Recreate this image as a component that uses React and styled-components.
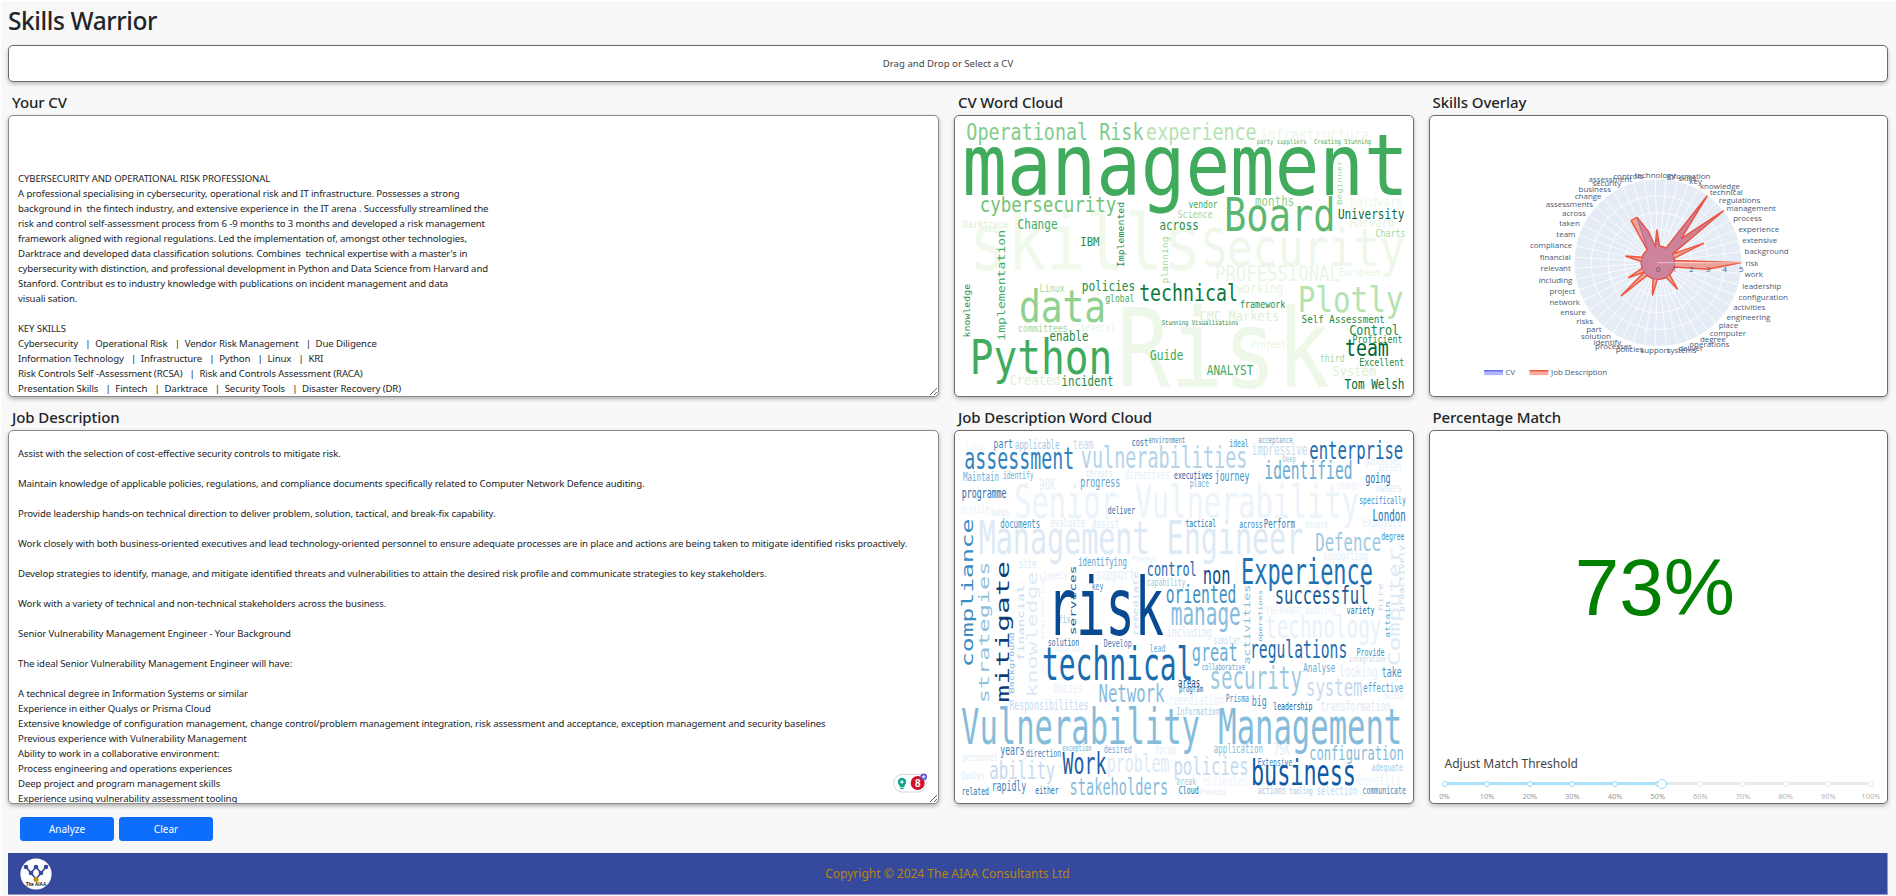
import React from 'react'
import styled, { createGlobalStyle } from 'styled-components'

const GlobalStyle = createGlobalStyle`
  html, body {
    margin: 0;
    padding: 0;
    background: #fff;
    overflow: hidden;
  }
`

const cvText = `


CYBERSECURITY AND OPERATIONAL RISK PROFESSIONAL
A professional specialising in cybersecurity, operational risk and IT infrastructure. Possesses a strong
background in  the fintech industry, and extensive experience in  the IT arena . Successfully streamlined the
risk and control self-assessment process from 6 -9 months to 3 months and developed a risk management
framework aligned with regional regulations. Led the implementation of, amongst other technologies,
Darktrace and developed data classification solutions. Combines  technical expertise with a master's in
cybersecurity with distinction, and professional development in Python and Data Science from Harvard and
Stanford. Contribut es to industry knowledge with publications on incident management and data
visuali sation.

KEY SKILLS
Cybersecurity   |  Operational Risk   |  Vendor Risk Management   |  Due Diligence
Information Technology   |  Infrastructure   |  Python   |  Linux   |  KRI
Risk Controls Self -Assessment (RCSA)   |  Risk and Controls Assessment (RACA)
Presentation Skills   |  Fintech   |  Darktrace   |  Security Tools   |  Disaster Recovery (DR)`

const jobText = `Assist with the selection of cost-effective security controls to mitigate risk.

Maintain knowledge of applicable policies, regulations, and compliance documents specifically related to Computer Network Defence auditing.

Provide leadership hands-on technical direction to deliver problem, solution, tactical, and break-fix capability.

Work closely with both business-oriented executives and lead technology-oriented personnel to ensure adequate processes are in place and actions are being taken to mitigate identified risks proactively.

Develop strategies to identify, manage, and mitigate identified threats and vulnerabilities to attain the desired risk profile and communicate strategies to key stakeholders.

Work with a variety of technical and non-technical stakeholders across the business.

Senior Vulnerability Management Engineer - Your Background

The ideal Senior Vulnerability Management Engineer will have:

A technical degree in Information Systems or similar
Experience in either Qualys or Prisma Cloud
Extensive knowledge of configuration management, change control/problem management integration, risk assessment and acceptance, exception management and security baselines
Previous experience with Vulnerability Management
Ability to work in a collaborative environment:
Process engineering and operations experiences
Deep project and program management skills
Experience using vulnerability assessment tooling`

// [word, x, baseline y, length, colour, vertical, font size if not derived from length]
const cvWords = [
  ['Operational Risk', 78, 148, 532, '#7fcc8b'], ['experience', 618, 148, 332, '#b5e3b0'],
  ['infrastructure', 960, 148, 328, '#eef8ea'], ['party suppliers', 950, 160, 150, '#5aae74'],
  ['Creating Stunning', 1122, 160, 172, '#41ab5d'], ['management', 66, 315, 1340, '#41ab5d', false, 212],
  ['cybersecurity', 118, 365, 410, '#74c476'], ['Board', 852, 423, 335, '#5cb870'],
  ['months', 945, 347, 118, '#8fd18f'], ['vendor', 745, 353, 88, '#41ab5d'],
  ['Science', 712, 384, 105, '#a1d99b'], ['hardware', 1230, 352, 160, '#eef8ea'],
  ['University', 1194, 388, 200, '#0b6b3a'], ['Harvard', 1230, 411, 133, '#e5f5e0'],
  ['Charts', 1307, 442, 90, '#a1d99b'], ['Darktrace', 68, 413, 135, '#dcf0d6'],
  ['Change', 232, 416, 120, '#41ab5d'], ['across', 658, 420, 118, '#238b45'],
  ['IBM', 420, 470, 58, '#238b45'], ['skills', 85, 540, 700, '#f0f9ec'],
  ['Security', 785, 530, 610, '#eef8ea'], ['PROFESSIONAL', 825, 575, 375, '#eaf6e6'],
  ['European', 1198, 558, 122, '#e5f5e0'], ['Risk', 530, 895, 640, '#edf8e9'],
  ['Beginner', 1205, 345, 135, '#a1d99b', true], ['Implemented', 553, 533, 198, '#238b45', true],
  ['planning', 685, 582, 142, '#a1d99b', true], ['implementation', 195, 755, 335, '#41ab5d', true],
  ['knowledge', 88, 745, 162, '#2b8c4e', true], ['Linux', 298, 607, 76, '#a1d99b'],
  ['policies', 425, 606, 160, '#238b45'], ['global', 495, 638, 88, '#41ab5d'],
  ['technical', 597, 636, 297, '#0a7a3e'], ['working', 890, 612, 140, '#e5f5e0'],
  ['framework', 900, 656, 136, '#238b45'], ['data', 236, 697, 262, '#8fd18f'],
  ['Plotly', 1073, 668, 318, '#b5e3b0'], ['CMC Markets', 778, 695, 240, '#dcf0d6'],
  ['Stunning Visualisations', 665, 708, 230, '#238b45'], ['Self Assessment', 1085, 700, 250, '#238b45'],
  ['Control', 1228, 737, 150, '#238b45'], ['Proficient', 1238, 762, 150, '#238b45'],
  ['committees', 233, 730, 150, '#a1d99b'], ['several', 420, 725, 105, '#e5f5e0'],
  ['enable', 328, 757, 117, '#238b45'], ['Python', 88, 855, 428, '#41ab5d'],
  ['Guide', 630, 812, 100, '#41ab5d'], ['Project', 933, 778, 104, '#e5f5e0'],
  ['team', 1215, 800, 132, '#00693a'], ['third', 1140, 820, 74, '#a1d99b'],
  ['Excellent', 1258, 830, 135, '#238b45'], ['ANALYST', 800, 860, 140, '#41ab5d'],
  ['System', 1177, 863, 132, '#dcf0d6'], ['Created', 208, 890, 152, '#dcf0d6'],
  ['incident', 364, 892, 156, '#238b45'], ['Tom Welsh', 1214, 900, 180, '#00693a']
]

const jobWords = [
  ['taken', 76, 135, 58, '#eff3ff'], ['part', 160, 128, 58, '#3a83bd'], ['applicable', 224, 130, 134, '#9ecae1'],
  ['team', 398, 130, 62, '#c6dbef'], ['cost', 574, 122, 50, '#2171b5'], ['environment', 625, 112, 110, '#4292c6'],
  ['ideal', 868, 125, 58, '#4292c6'], ['acceptance', 955, 113, 103, '#6baed6'], ['impressive', 935, 148, 167, '#c6dbef'],
  ['Deep', 1028, 168, 40, '#9ecae1'], ['enterprise', 1108, 160, 282, '#1d6cb0'], ['assessment', 72, 192, 330, '#3182bd'],
  ['vulnerabilities', 422, 188, 500, '#b3d3e8'], ['identified', 973, 222, 265, '#6baed6'], ['processes', 1277, 180, 105, '#e3eef9'],
  ['project', 1317, 198, 70, '#e3eef9'], ['Maintain', 68, 228, 108, '#6baed6'], ['identify', 188, 220, 92, '#6baed6'],
  ['threats', 437, 214, 80, '#dceaf6'], ['directives', 554, 220, 134, '#e3eef9'], ['executives', 702, 220, 116, '#1a5a96'],
  ['journey', 824, 228, 104, '#4292c6'], ['going', 1276, 232, 76, '#2171b5'], ['progress', 420, 244, 120, '#5ba3cf'],
  ['place', 749, 246, 58, '#6baed6'], ['90K', 296, 253, 50, '#e3eef9'], ['change', 1190, 250, 68, '#e8f1fa'],
  ['owners', 1308, 260, 78, '#dceaf6'], ['programme', 64, 278, 135, '#2d6ca8'], ['Senior Vulnerability', 222, 338, 1035, '#ebf3fb'],
  ['specifically', 1258, 296, 140, '#4292c6'], ['profile', 62, 323, 84, '#e8f1fa'], ['hands', 152, 332, 56, '#dceaf6'],
  ['deliver', 503, 325, 82, '#2b6ca3'], ['London', 1298, 346, 100, '#2171b5'], ['documents', 180, 368, 120, '#4292c6'],
  ['evaluate', 330, 365, 104, '#dceaf6'], ['Assist', 456, 368, 80, '#dceaf6'], ['tactical', 736, 366, 92, '#2171b5'],
  ['across', 898, 370, 70, '#3182bd'], ['Perform', 971, 368, 94, '#3182bd'], ['ensure', 1095, 370, 70, '#e3eef9'],
  ['exposure', 1268, 367, 120, '#e3eef9'], ['Management Engineer', 115, 448, 975, '#dceaf6'], ['Defence', 1126, 437, 198, '#9ecae1'],
  ['degree', 1324, 404, 70, '#4292c6'], ['supporting', 1150, 466, 134, '#e3eef9'], ['Process', 577, 472, 70, '#e3eef9'],
  ['identifying', 414, 484, 146, '#5ba3cf'], ['control', 620, 512, 150, '#1d6cb0'], ['Experience', 903, 537, 396, '#2171b5'],
  ['non', 788, 537, 84, '#0f4f8f'], ['closely', 298, 523, 84, '#e3eef9'], ['support', 466, 525, 118, '#e3eef9'],
  ['capability', 620, 542, 116, '#9ecae1'], ['key', 455, 556, 34, '#4292c6'], ['site', 236, 488, 52, '#dceaf6'],
  ['oriented', 677, 596, 212, '#4292c6'], ['successful', 1004, 597, 282, '#1a5a96'], ['variety', 1220, 627, 84, '#2171b5'],
  ['risk', 320, 692, 352, '#084a91'], ['fix', 355, 655, 36, '#9ecae1'], ['manage', 692, 660, 210, '#85bcdc'],
  ['relevant', 978, 628, 106, '#e8f1fa'], ['auditing', 1095, 628, 92, '#e8f1fa'], ['technology', 975, 700, 350, '#e8f1fa'],
  ['including', 680, 697, 135, '#dceaf6'], ['similar', 820, 718, 80, '#c6dbef'], ['solution', 323, 725, 94, '#2d6ca8'],
  ['Develop', 491, 728, 84, '#3182bd'], ['lead', 628, 742, 48, '#6baed6'], ['baselines', 345, 742, 86, '#e8f1fa'],
  ['regulations', 930, 760, 292, '#1d6cb0'], ['great', 755, 770, 138, '#6baed6'], ['Provide', 1250, 755, 84, '#4292c6'],
  ['integration', 1227, 773, 110, '#c6dbef'], ['Analyse', 1090, 802, 96, '#6baed6'], ['collaborative', 785, 798, 130, '#5ba3cf'],
  ['technical', 305, 826, 455, '#1a6cb0'], ['looking', 1198, 818, 116, '#e3eef9'], ['take', 1326, 818, 60, '#4292c6'],
  ['security', 808, 855, 278, '#9ecae1'], ['areas', 714, 848, 66, '#0f4f8f'], ['program', 717, 862, 72, '#2b6ca3'],
  ['system', 1098, 876, 170, '#c6dbef'], ['effective', 1270, 862, 120, '#5ba3cf'], ['skills', 1332, 884, 58, '#dceaf6'],
  ['Duties', 340, 865, 88, '#e8f1fa'], ['Network', 475, 893, 198, '#85bcdc'], ['Prisma', 857, 892, 70, '#4292c6'],
  ['big', 935, 906, 45, '#4292c6'], ['leadership', 1000, 918, 117, '#1a5a96'], ['transformation', 1142, 920, 210, '#dceaf6'],
  ['remediation', 685, 903, 165, '#e8f1fa'], ['Responsibilities', 207, 917, 238, '#c6dbef'], ['Information', 709, 932, 130, '#a5cde4'],
  ['Vulnerability Management', 62, 1020, 1325, '#85bcdc'], ['exception', 366, 1040, 88, '#6baed6'], ['desired', 491, 1046, 84, '#6baed6'],
  ['focus', 643, 1050, 66, '#e3eef9'], ['application', 821, 1048, 148, '#85bcdc'], ['75K', 1000, 1054, 50, '#e3eef9'],
  ['configuration', 1108, 1068, 284, '#85bcdc'], ['years', 180, 1053, 73, '#3a83bd'], ['direction', 257, 1060, 106, '#3a83bd'],
  ['personnel', 67, 1070, 105, '#dceaf6'], ['Work', 367, 1112, 132, '#1d5fa3'], ['problem', 500, 1105, 188, '#dceaf6'],
  ['policies', 700, 1115, 226, '#c6dbef'], ['Extensive', 953, 1086, 104, '#3a83bd'], ['business', 933, 1145, 315, '#0f5aa3'],
  ['adequate', 1295, 1100, 94, '#a5cde4'], ['ability', 147, 1125, 198, '#c6dbef'], ['Qualys', 62, 1127, 70, '#dceaf6'],
  ['rapidly', 154, 1163, 104, '#3a83bd'], ['stakeholders', 388, 1175, 296, '#85bcdc'], ['break', 710, 1144, 58, '#9ecae1'],
  ['estimated', 787, 1148, 135, '#eef4fb'], ['benefits', 1253, 1145, 130, '#eef4fb'], ['related', 64, 1175, 82, '#2b6ca3'],
  ['either', 285, 1172, 70, '#2b6ca3'], ['Cloud', 716, 1172, 60, '#2b6ca3'], ['Previous', 780, 1175, 80, '#dceaf6'],
  ['actions', 953, 1172, 84, '#9ecae1'], ['tooling', 1048, 1170, 70, '#9ecae1'], ['selection', 1130, 1175, 122, '#c6dbef'],
  ['communicate', 1268, 1172, 130, '#3a83bd'],
  ['compliance', 98, 788, 448, '#3a8cc4', true], ['strategies', 145, 897, 427, '#8fbfdc', true],
  ['mitigate', 205, 895, 427, '#0a3d75', true], ['Background', 222, 868, 185, '#85bcdc', true],
  ['financial', 252, 770, 230, '#c6dbef', true], ['knowledge', 290, 880, 380, '#dceaf6', true],
  ['engineering', 312, 706, 186, '#e8f1fa', true], ['services', 408, 692, 210, '#1a5a96', true],
  ['remediate', 595, 695, 195, '#c6dbef', true], ['activities', 930, 780, 240, '#85bcdc', true],
  ['operations', 965, 712, 157, '#6baed6', true], ['hire', 1328, 618, 83, '#c6dbef', true],
  ['attain', 1350, 700, 110, '#6baed6', true], ['Computer', 1380, 785, 355, '#dceaf6', true],
  ['proactively', 1393, 622, 202, '#c6dbef', true]
]

const skills = ['risk', 'background', 'extensive', 'experience', 'process', 'management', 'regulations', 'technical', 'knowledge', 'key', 'skills', 'information', 'technology', 'controls', 'assessment', 'security', 'business', 'change', 'assessments', 'across', 'taken', 'team', 'compliance', 'financial', 'relevant', 'including', 'project', 'network', 'ensure', 'risks', 'part', 'solution', 'identify', 'processes', 'policies', 'support', 'systems', 'deliver', 'operations', 'degree', 'computer', 'place', 'engineering', 'activities', 'configuration', 'leadership', 'work']

const spikesCv = { 5: 5, 6: 2, 7: 4.6, 12: 1.5, 14: 2, 15: 3, 16: 1.4 }
const spikesJob = { 0: 5, 3: 3, 5: 5, 6: 2, 7: 5, 12: 2, 14: 2, 15: 3, 16: 3, 22: 2, 27: 2, 29: 3, 34: 2, 40: 2, 46: 3 }

const CX = 228.7
const CY = 147.7
const UNIT = 16.8

const polar = (r, i) => {
  const a = (i * 2 * Math.PI) / skills.length
  return [CX + r * Math.cos(a), CY - r * Math.sin(a)]
}

const polygon = (spikes) =>
  skills.map((_, i) => polar((spikes[i] || 1) * UNIT, i).map((n) => n.toFixed(1)).join(',')).join(' ')

const brightness = (hex) =>
  parseInt(hex.slice(1, 3), 16) + parseInt(hex.slice(3, 5), 16) + parseInt(hex.slice(5, 7), 16)

const WordCloud = ({ words, view, stretch }) => (
  <CloudSvg viewBox={view} preserveAspectRatio="none">
    {[...words].sort((a, b) => brightness(b[4]) - brightness(a[4])).map(([text, x, y, length, color, vertical, size]) => {
      const along = vertical ? length / stretch : length
      const turn = vertical ? ' rotate(-90)' : ''
      return (
        <CloudWord
          key={text + x}
          fontSize={size || along / (0.602 * text.length)}
          textLength={along}
          lengthAdjust="spacingAndGlyphs"
          fill={color}
          transform={`translate(${x} ${y}) scale(1 ${stretch})${turn}`}
        >
          {text}
        </CloudWord>
      )
    })}
  </CloudSvg>
)

const Radar = () => (
  <CloudSvg viewBox="0 0 459 282">
    <circle cx={CX} cy={CY} r={5 * UNIT} fill="#e5ecf6" />
    {skills.map((_, i) => {
      const [x, y] = polar(5 * UNIT, i)
      return <line key={i} x1={CX} y1={CY} x2={x} y2={y} stroke="#fff" strokeWidth="0.8" />
    })}
    {[1, 2, 3, 4].map((r) => (
      <circle key={r} cx={CX} cy={CY} r={r * UNIT} fill="none" stroke="#fff" strokeWidth="0.8" />
    ))}
    <polygon points={polygon(spikesCv)} fill="rgba(99,110,250,0.5)" stroke="#636efa" strokeWidth="1" />
    <polygon points={polygon(spikesJob)} fill="rgba(239,85,59,0.5)" stroke="#ef553b" strokeWidth="1.4" />
    <line x1={CX} y1={CY} x2={CX + 5 * UNIT} y2={CY} stroke="#fff" strokeOpacity="0.55" strokeWidth="1" />
    {[0, 1, 2, 3, 4, 5].map((n) => (
      <ChartText key={n} x={CX + n * UNIT} y={CY + 9.5} textAnchor="middle">{n}</ChartText>
    ))}
    {skills.map((name, i) => {
      const [x, y] = polar(88, i)
      const c = Math.cos((i * 2 * Math.PI) / skills.length)
      const anchor = Math.abs(c) < 0.05 ? 'middle' : c > 0 ? 'start' : 'end'
      return <ChartText key={name} x={x} y={y + 3} textAnchor={anchor}>{name}</ChartText>
    })}
    <rect x="53.7" y="256" width="19" height="5" fill="rgba(99,110,250,0.5)" />
    <line x1="53.7" y1="256.5" x2="72.7" y2="256.5" stroke="#636efa" strokeWidth="1.4" />
    <ChartText x="75" y="261">CV</ChartText>
    <rect x="99.3" y="256" width="19" height="5" fill="rgba(239,85,59,0.5)" />
    <line x1="99.3" y1="256.5" x2="118.3" y2="256.5" stroke="#ef553b" strokeWidth="1.4" />
    <ChartText x="121" y="261">Job Description</ChartText>
  </CloudSvg>
)

const GrammarWidget = () => (
  <Widget viewBox="0 0 34 20">
    <rect x="0.5" y="1.5" width="33" height="17.5" rx="8.7" fill="#fff" stroke="#d4d4e0" />
    <circle cx="9" cy="9" r="4.2" fill="#14a58c" />
    <rect x="6.6" y="12.2" width="4.8" height="2" fill="#14a58c" />
    <rect x="7.4" y="14.8" width="3.2" height="1.4" fill="#14a58c" />
    <circle cx="9" cy="9" r="1.5" fill="#fff" />
    <circle cx="24.7" cy="10" r="7" fill="#d0112b" />
    <WidgetNumber x="24.7" y="13.6" textAnchor="middle">8</WidgetNumber>
    <circle cx="30.7" cy="3.8" r="3.4" fill="#5a55d6" />
    <path d="M30.7 2v3.6M28.9 3.8h3.6" stroke="#fff" strokeWidth="1" />
  </Widget>
)

const Logo = () => (
  <LogoSvg viewBox="0 0 32 32">
    <circle cx="16" cy="16" r="15.6" fill="#fff" />
    <path d="M6 9l5 6 5-6 5 6 5-6M11 15l5 6 5-6" fill="none" stroke="#35499d" strokeWidth="1.6" />
    {[[6, 9], [16, 9], [26, 9], [11, 15], [21, 15]].map(([x, y]) => (
      <circle key={x} cx={x} cy={y} r="2.3" fill="#35499d" />
    ))}
    <circle cx="16" cy="21.5" r="2.5" fill="#c18f10" />
    <LogoText x="16" y="27.6" textAnchor="middle">The AIAA</LogoText>
  </LogoSvg>
)

const marks = [0, 10, 20, 30, 40, 50, 60, 70, 80, 90, 100]

const ThresholdSlider = ({ value }) => (
  <SliderBlock>
    <SliderLabel>Adjust Match Threshold</SliderLabel>
    <Rail>
      <RailFill style={{ width: `${value}%` }} />
      <Dots>
        {marks.map((m) => <Dot key={m} $active={m <= value} />)}
      </Dots>
      <Handle style={{ left: `${value}%` }} />
    </Rail>
    <Ticks>
      {marks.map((m) => <Tick key={m} $active={m <= value}>{m}%</Tick>)}
    </Ticks>
  </SliderBlock>
)

export default function App () {
  return (
    <Page>
      <GlobalStyle />
      <Title>Skills Warrior</Title>
      <DropZone>Drag and Drop or Select a CV</DropZone>
      <Board>
        <Panel>
          <Heading>Your CV</Heading>
          <TextCard $height={282}>
            <TextBox $padTop={10} readOnly defaultValue={cvText} />
          </TextCard>
        </Panel>
        <Panel>
          <Heading>CV Word Cloud</Heading>
          <Card $height={282}>
            <WordCloud words={cvWords} view="44 76 1374 846" stretch={1.23} />
          </Card>
        </Panel>
        <Panel>
          <Heading>Skills Overlay</Heading>
          <Card $height={282}>
            <Radar />
          </Card>
        </Panel>
        <Panel>
          <Heading>Job Description</Heading>
          <TextCard $height={374}>
            <TextBox $padTop={15} readOnly defaultValue={jobText} />
            <GrammarWidget />
          </TextCard>
        </Panel>
        <Panel>
          <Heading>Job Description Word Cloud</Heading>
          <Card $height={374}>
            <WordCloud words={jobWords} view="44 76 1374 1122" stretch={1.64} />
          </Card>
        </Panel>
        <Panel>
          <Heading>Percentage Match</Heading>
          <MatchCard $height={374}>
            <Score>73%</Score>
            <ThresholdSlider value={51} />
          </MatchCard>
        </Panel>
      </Board>
      <Actions>
        <ActionButton>Analyze</ActionButton>
        <ActionButton>Clear</ActionButton>
      </Actions>
      <Footer>
        <Logo />
        <Copyright>Copyright © 2024 The AIAA Consultants Ltd</Copyright>
      </Footer>
    </Page>
  )
}

const sans = `"Noto Sans", "Open Sans", sans-serif`

const Page = styled.div`
  box-sizing: border-box;
  height: 895px;
  margin: 1px 0 0 1px;
  padding: 0 8px 0 7px;
  background: #f8f8f8;
  color: #212529;
  font-family: ${sans};
`

const Title = styled.h1`
  margin: 0;
  height: 44px;
  padding-top: 2px;
  box-sizing: border-box;
  font-size: 24.5px;
  line-height: 36px;
  font-weight: 500;
  letter-spacing: -0.4px;
`

const DropZone = styled.div`
  box-sizing: border-box;
  height: 37px;
  display: flex;
  align-items: center;
  justify-content: center;
  background: #fff;
  border: 1px solid #6c6c6c;
  border-radius: 5px;
  box-shadow: 0 2px 4px rgba(0, 0, 0, 0.25);
  font-size: 9.6px;
  color: #444;
`

const Board = styled.div`
  display: grid;
  grid-template-columns: 931px 1fr 1fr;
  column-gap: 15px;
`

const Panel = styled.section`
  display: flex;
  flex-direction: column;
  min-width: 0;
`

const Heading = styled.h5`
  margin: 0;
  height: 33px;
  box-sizing: border-box;
  padding: 10px 0 3px 4px;
  font-size: 15px;
  line-height: 20px;
  font-weight: 500;
  letter-spacing: -0.1px;
`

const Card = styled.div`
  position: relative;
  box-sizing: border-box;
  height: ${(p) => p.$height}px;
  background: #fff;
  border: 1px solid #6c6c6c;
  border-radius: 5px;
  box-shadow: 0 2px 4px rgba(0, 0, 0, 0.25);
  overflow: hidden;
`

const TextCard = styled(Card)`
  border: 0;
  overflow: visible;
  box-shadow: none;
`

const TextBox = styled.textarea`
  display: block;
  box-sizing: border-box;
  width: 100%;
  height: 100%;
  margin: 0;
  padding: ${(p) => p.$padTop}px 8px 0 9px;
  background: #fff;
  border: 1px solid #8a8a8a;
  border-radius: 5px;
  box-shadow: 0 2px 4px rgba(0, 0, 0, 0.3);
  outline: none;
  overflow: hidden;
  resize: both;
  font-family: ${sans};
  font-size: 9.6px;
  line-height: 15px;
  letter-spacing: -0.11px;
  color: #212529;
`

const CloudSvg = styled.svg`
  display: block;
  width: 100%;
  height: 100%;
`

const CloudWord = styled.text`
  font-family: "DejaVu Sans Mono", "Liberation Mono", monospace;
`

const ChartText = styled.text`
  font-family: "Open Sans", "Noto Sans", sans-serif;
  font-size: 8px;
  fill: #4a5a78;
`

const Widget = styled.svg`
  position: absolute;
  right: 12px;
  bottom: 11px;
  width: 34px;
  height: 20px;
`

const WidgetNumber = styled.text`
  font-family: "Liberation Sans", sans-serif;
  font-size: 10px;
  font-weight: 700;
  fill: #fff;
`

const LogoSvg = styled.svg`
  width: 32px;
  height: 32px;
  margin-left: 12px;
`

const LogoText = styled.text`
  font-family: "Liberation Sans", sans-serif;
  font-size: 4.6px;
  font-weight: 700;
  fill: #111;
`

const MatchCard = styled(Card)`
  display: flex;
  flex-direction: column;
`

const Score = styled.div`
  flex: 1;
  display: flex;
  align-items: center;
  justify-content: center;
  padding-right: 7px;
  font-family: "Liberation Sans", Arial, sans-serif;
  font-size: 80px;
  color: #008000;
`

const SliderBlock = styled.div`
  height: 59px;
  padding: 0 16px 0 15px;
`

const SliderLabel = styled.div`
  padding-top: 11px;
  height: 28px;
  box-sizing: border-box;
  font-size: 12px;
  line-height: 18px;
  color: #444;
`

const Rail = styled.div`
  position: relative;
  height: 3px;
  background: #e9e9e9;
  border-radius: 2px;
  margin-top: 10px;
`

const RailFill = styled.div`
  height: 100%;
  background: #abe2fb;
  border-radius: 2px;
`

const Dots = styled.div`
  position: absolute;
  inset: 0;
  display: flex;
  justify-content: space-between;
  align-items: center;
`

const Dot = styled.span`
  width: 0;
  display: flex;
  justify-content: center;
  &::after {
    content: '';
    flex: none;
    box-sizing: border-box;
    width: 6px;
    height: 6px;
    background: #fff;
    border: 1.5px solid ${(p) => (p.$active ? '#96dbfa' : '#e9e9e9')};
    border-radius: 50%;
  }
`

const Handle = styled.span`
  position: absolute;
  top: 50%;
  width: 10px;
  height: 10px;
  box-sizing: border-box;
  transform: translate(-50%, -50%);
  background: #fff;
  border: 1.5px solid #96dbfa;
  border-radius: 50%;
`

const Ticks = styled.div`
  display: flex;
  justify-content: space-between;
  margin-top: 6px;
`

const Tick = styled.span`
  width: 0;
  display: flex;
  justify-content: center;
  white-space: nowrap;
  font-size: 7.5px;
  line-height: 11px;
  color: ${(p) => (p.$active ? '#999' : '#b3b3b3')};
`

const Actions = styled.div`
  display: flex;
  gap: 5px;
  padding: 13px 0 0 12px;
`

const ActionButton = styled.button`
  width: 94px;
  height: 24px;
  padding: 0;
  background: #0d6efd;
  border: 1px solid #0d6efd;
  border-radius: 3px;
  color: #fff;
  font-family: ${sans};
  font-size: 10px;
`

const Footer = styled.footer`
  display: grid;
  grid-template-columns: 1fr auto 1fr;
  align-items: center;
  box-sizing: border-box;
  height: 42px;
  margin-top: 12px;
  background: #35499d;
  border-right: 1px solid #8f9bd0;
  border-bottom: 1px solid #8f9bd0;
`

const Copyright = styled.div`
  font-size: 12px;
  color: #b8860b;
`
